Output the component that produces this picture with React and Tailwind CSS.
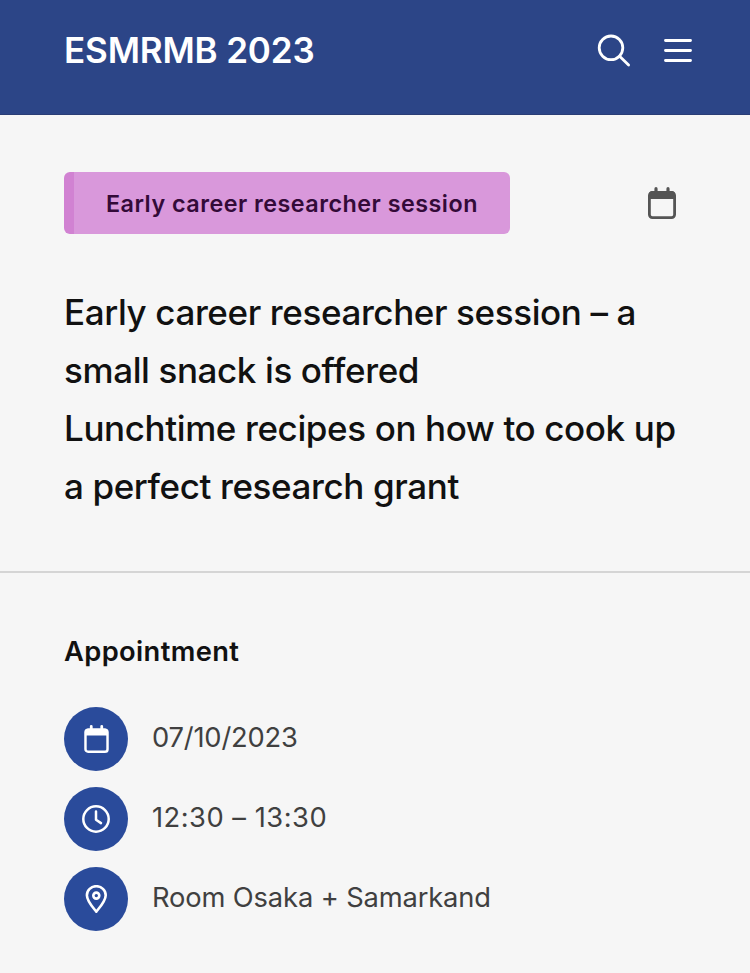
function SearchIcon() {
  return (
    <svg className="h-9 w-9" viewBox="0 0 36 36" fill="none" stroke="currentColor" strokeWidth="2.8" strokeLinecap="round">
      <circle cx="15" cy="15.8" r="11.8" />
      <path d="M23.6 24.2L32.6 33" />
    </svg>
  );
}

function MenuIcon() {
  return (
    <svg className="h-7 w-7" viewBox="0 0 28 28" fill="none" stroke="currentColor" strokeWidth="2.9" strokeLinecap="round">
      <path d="M1.5 4.5h25M1.5 14.5h25M1.5 24.5h25" />
    </svg>
  );
}

function CalendarIcon({ className }) {
  return (
    <svg className={className} viewBox="0 0 28 32" fill="none" stroke="currentColor">
      <rect x="1.4" y="5.4" width="25.2" height="25.2" rx="3" strokeWidth="2.8" />
      <path d="M1 12V8a4 4 0 0 1 4-4h18a4 4 0 0 1 4 4v4z" fill="currentColor" stroke="none" />
      <path d="M8 1.7v4M20 1.7v4" strokeWidth="3.2" strokeLinecap="round" />
    </svg>
  );
}

function ClockIcon() {
  return (
    <svg className="h-7 w-7" viewBox="0 0 28 28" fill="none" stroke="currentColor" strokeWidth="2.5" strokeLinecap="round" strokeLinejoin="round">
      <circle cx="14" cy="14" r="12.7" />
      <path d="M14 6.5v8.2l5 3.4" />
    </svg>
  );
}

function PinIcon() {
  return (
    <svg className="h-7 w-[22px]" viewBox="0 0 22 28" fill="none" stroke="currentColor" strokeWidth="2.6" strokeLinejoin="round">
      <path d="M11.3 26.6C9.3 24 1.9 16.4 1.9 10.2a9.4 9 0 0 1 18.8 0C20.7 16.4 13.3 24 11.3 26.6z" />
      <circle cx="11.3" cy="10.6" r="3" />
    </svg>
  );
}

function DetailRow({ icon, className, children }) {
  return (
    <li className="flex items-center gap-6">
      <span className="flex h-16 w-16 shrink-0 items-center justify-center rounded-full bg-[#2a4b9b] text-white">
        {icon}
      </span>
      <span className={`whitespace-nowrap pb-0.5 text-[27.3px] leading-9 text-[#404040] ${className}`}>{children}</span>
    </li>
  );
}

function App() {
  return (
    <div className="flex h-[973px] w-[750px] flex-col overflow-hidden bg-[#f6f6f6] font-['Inter',sans-serif] text-[#111111]">
      <header className="flex h-[115px] shrink-0 items-start justify-between border-b border-[#2a3d75] bg-[#2c4587] pl-16 pr-[58px] text-white">
        <h1 className="whitespace-nowrap pt-[27px] text-[35px] font-semibold leading-[46px] tracking-[-0.15px]">ESMRMB 2023</h1>
        <div className="flex items-center gap-8 pt-8">
          <SearchIcon />
          <MenuIcon />
        </div>
      </header>

      <section className="h-[458px] shrink-0 border-b-2 border-[#d5d5d5] px-16 pt-[57px]">
        <div className="flex items-center justify-between pr-[10px]">
          <span className="flex h-[62px] w-[446px] items-center overflow-hidden rounded-md border-l-[10px] border-[#d182d2] bg-[#d998db] pl-8 text-[23.3px] font-semibold text-[#330a38]">
            <span className="whitespace-nowrap pt-0.5 tracking-[0.5px]">Early career researcher session</span>
          </span>
          <CalendarIcon className="h-8 w-7 text-[#555555]" />
        </div>
        <h2 className="mt-[49px] whitespace-nowrap text-[35px] font-medium leading-[58px] tracking-[-0.39px]">
          Early career researcher session – a<br />
          small snack is offered<br />
          Lunchtime recipes on how to cook up<br />
          a perfect research grant
        </h2>
      </section>

      <section className="px-16 pt-[61px]">
        <h3 className="text-[27.3px] font-semibold leading-9 tracking-[0.38px]">Appointment</h3>
        <ul className="mt-[37px] flex flex-col gap-4">
          <DetailRow icon={<CalendarIcon className="h-7 w-[25px]" />} className="tracking-[-0.18px]">07/10/2023</DetailRow>
          <DetailRow icon={<ClockIcon />} className="tracking-[0.5px]">12:30 – 13:30</DetailRow>
          <DetailRow icon={<PinIcon />} className="tracking-[-0.13px]">Room Osaka + Samarkand</DetailRow>
        </ul>
      </section>
    </div>
  );
}

export default App;
